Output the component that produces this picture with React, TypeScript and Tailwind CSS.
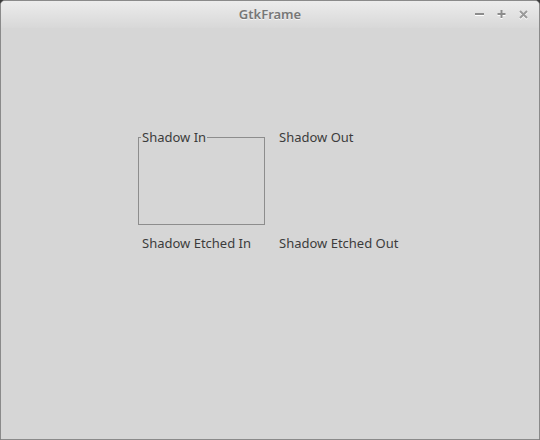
export default function App() {
  const font = { fontFamily: '"Noto Sans", "Open Sans", sans-serif' };

  return (
    <div className="w-[540px] h-[440px] bg-[#3a3a3a]" style={font}>
      <div className="w-full h-full rounded-t-[5px] border border-[#8a8a8a] bg-[#d6d6d6] flex flex-col overflow-hidden">
        {/* Title bar */}
        <div className="h-[27px] shrink-0 relative flex items-center justify-center bg-gradient-to-b from-[#ececec] to-[#d8d8d8]">
          <span className="text-[13px] font-semibold text-[#777777] [text-shadow:0_1px_0_#f4f4f4]">GtkFrame</span>
          <div className="absolute right-[10px] top-0 h-full flex items-center gap-[11px]">
            <svg width="11" height="11" viewBox="0 0 11 11">
              <rect x="1" y="5" width="9" height="2" fill="#ffffff" />
              <rect x="1" y="4" width="9" height="2" fill="#8c8c8c" />
            </svg>
            <svg width="11" height="11" viewBox="0 0 11 11">
              <path d="M1.5 6h8M5.5 2v8" stroke="#ffffff" strokeWidth="2" />
              <path d="M1.5 5h8M5.5 1v8" stroke="#8c8c8c" strokeWidth="2" />
            </svg>
            <svg width="11" height="11" viewBox="0 0 11 11">
              <path d="M2 3l7 7M9 3l-7 7" stroke="#ffffff" strokeWidth="2" />
              <path d="M2 2l7 7M9 2l-7 7" stroke="#9a9a9a" strokeWidth="2" />
            </svg>
          </div>
        </div>

        {/* Content */}
        <div className="flex-1 pl-[137px] pt-[101px]">
          <div className="grid grid-cols-[127px_auto] gap-x-[10px] gap-y-[10px] text-[13px] leading-[16px] text-[#3c3c3c]">
            <div className="relative h-[96px]">
              <div className="mt-[8px] h-[88px] border border-[#8d8d8d]" />
              <span className="absolute left-[3px] top-0 px-[1px] bg-[#d6d6d6]">Shadow In</span>
            </div>
            <div className="pl-[4px]">Shadow Out</div>
            <div className="pl-[4px]">Shadow Etched In</div>
            <div className="pl-[4px]">Shadow Etched Out</div>
          </div>
        </div>
      </div>
    </div>
  );
}
